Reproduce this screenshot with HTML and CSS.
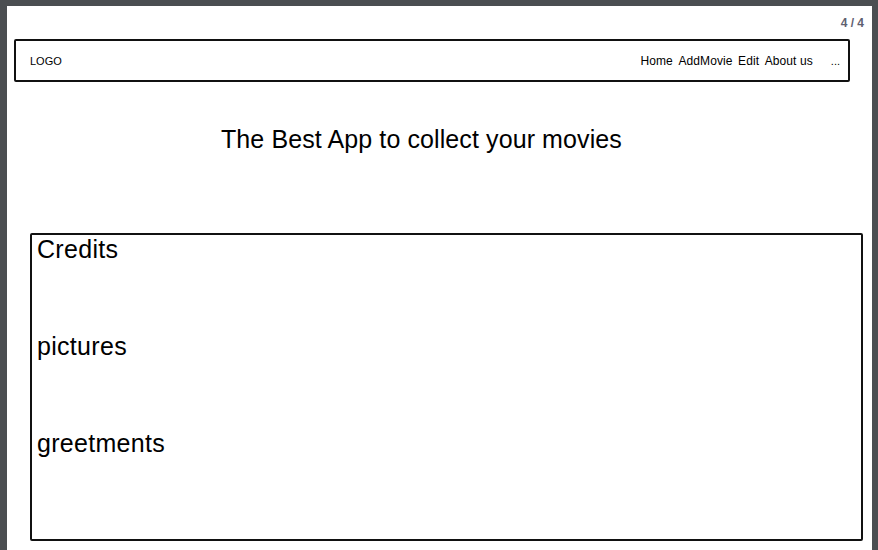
FILE: index.html
```html
<!DOCTYPE html>
<html>
<head>
<meta charset="utf-8">
<link rel="stylesheet" href="styles.css">
</head>
<body>
<div class="page">
  <div class="pager">4 / 4</div>
  <div class="nav">
    <div class="logo">LOGO</div>
    <div class="links">
      <span>Home</span>
      <span>AddMovie</span>
      <span>Edit</span>
      <span>About us</span>
    </div>
    <div class="more">...</div>
  </div>
  <h1 class="title">The Best App to collect your movies</h1>
  <div class="content">
    <div class="item">Credits</div>
    <div class="item">pictures</div>
    <div class="item">greetments</div>
  </div>
</div>
</body>
</html>
```
FILE: styles.css
```css
html, body {
  margin: 0;
  padding: 0;
}
body {
  width: 878px;
  height: 550px;
  overflow: hidden;
  background: #4b4e51;
  font-family: "Liberation Sans", Arial, sans-serif;
  color: #000;
}
.page {
  margin: 6px 6px 0 7px;
  height: 544px;
  background: #fff;
  display: flow-root;
}
.pager {
  margin-top: 10px;
  padding-right: 8px;
  text-align: right;
  font-size: 12px;
  font-weight: bold;
  line-height: 14px;
  color: #5e6070;
}
.nav {
  margin: 9px 0 0 7px;
  width: 836px;
  height: 43px;
  box-sizing: border-box;
  border: 2px solid #111;
  border-radius: 2px;
  display: flex;
  align-items: center;
  padding: 0 8px 0 14px;
  font-size: 12px;
}
.logo {
  font-size: 11px;
  flex: 1;
}
.links {
  display: flex;
  gap: 5.5px;
  letter-spacing: 0.1px;
}
.more {
  margin-left: 18px;
  font-size: 11px;
}
.title {
  margin: 42px 0 0 214px;
  font-size: 25px;
  font-weight: normal;
  line-height: 30px;
  letter-spacing: 0.1px;
}
.content {
  margin: 79px 0 0 23px;
  width: 833px;
  height: 308px;
  box-sizing: border-box;
  border: 2px solid #111;
  border-radius: 2px;
  padding: 0 0 0 5px;
}
.item {
  font-size: 25px;
  line-height: 28px;
  height: 97px;
  letter-spacing: 0.3px;
}
```
